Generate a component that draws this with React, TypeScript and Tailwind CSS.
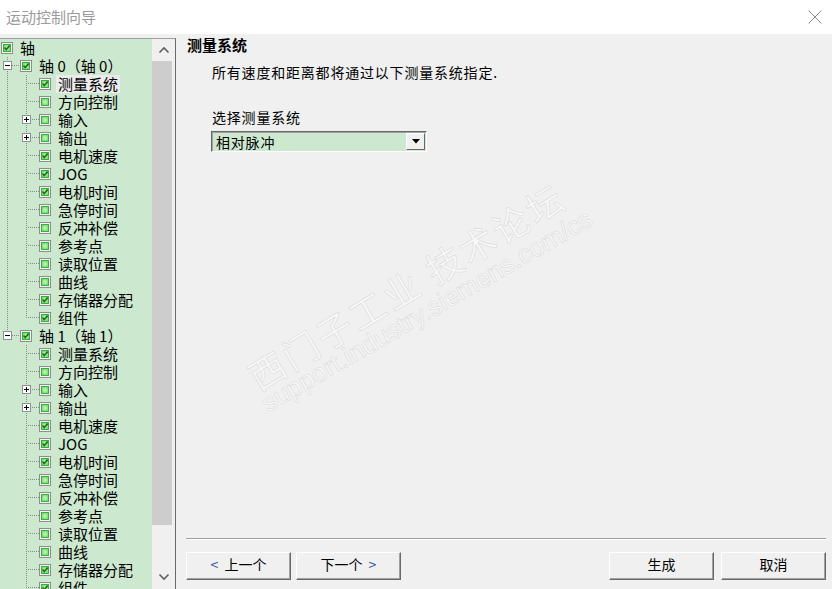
import { useId } from "react";

type Item = { t: string; c: boolean; exp?: boolean };

const items: Item[] = [
  { t: "测量系统", c: true },
  { t: "方向控制", c: false },
  { t: "输入", c: false, exp: true },
  { t: "输出", c: false, exp: true },
  { t: "电机速度", c: true },
  { t: "JOG", c: true },
  { t: "电机时间", c: true },
  { t: "急停时间", c: false },
  { t: "反冲补偿", c: false },
  { t: "参考点", c: false },
  { t: "读取位置", c: false },
  { t: "曲线", c: false },
  { t: "存储器分配", c: true },
  { t: "组件", c: true },
];

function Check({ checked }: { checked: boolean }) {
  const id = useId();
  return (
    <svg width="12" height="12" className="shrink-0">
      <defs>
        <radialGradient id={id} cx="50%" cy="50%" r="70%">
          <stop offset="0%" stopColor="#c8f7bf" />
          <stop offset="100%" stopColor="#4fd34f" />
        </radialGradient>
      </defs>
      <rect x="0.5" y="0.5" width="11" height="11" fill="#f4f4f4" stroke="#8d8d8d" />
      <rect x="2.5" y="2.5" width="7" height="7" fill={`url(#${id})`} stroke="#3aae3a" />
      {checked && <path d="M3.5 5.5 L5.2 7.5 L8.7 3.6" stroke="#1e6e1e" strokeWidth="1.6" fill="none" />}
    </svg>
  );
}

function Expander({ x, open }: { x: number; open: boolean }) {
  return (
    <g>
      <rect x={x + 0.5} y="4.5" width="8" height="8" fill="#fff" stroke="#8f8f8f" />
      <line x1={x + 2} y1="8.5" x2={x + 7} y2="8.5" stroke="#000" />
      {!open && <line x1={x + 4.5} y1="6" x2={x + 4.5} y2="11" stroke="#000" />}
    </g>
  );
}

const dot = { stroke: "#8a8a8a", strokeDasharray: "1 1" };

function AxisLines({ last }: { last: boolean }) {
  return (
    <svg width="20" height="18" className="shrink-0">
      <line x1="7.5" y1="0" x2="7.5" y2={last ? 5 : 18} {...dot} />
      <line x1="12" y1="8.5" x2="20" y2="8.5" {...dot} />
      <Expander x={3} open />
    </svg>
  );
}

function ChildLines({ trunk, last, exp }: { trunk: boolean; last: boolean; exp?: boolean }) {
  return (
    <svg width="39" height="18" className="shrink-0">
      {trunk && <line x1="7.5" y1="0" x2="7.5" y2="18" {...dot} />}
      <line x1="26.5" y1="0" x2="26.5" y2={last ? 9 : 18} {...dot} />
      <line x1="28" y1="8.5" x2="39" y2="8.5" {...dot} />
      {exp && <Expander x={22} open={false} />}
    </svg>
  );
}

function Axis({ n, last, selectFirst }: { n: number; last: boolean; selectFirst: boolean }) {
  return (
    <>
      <div className="flex h-[18px] items-center">
        <AxisLines last={last} />
        <Check checked />
        <span className="ml-[7px] leading-[18px]">轴 {n}（轴 {n}）</span>
      </div>
      {items.map((it, i) => (
        <div key={i} className="flex h-[18px] items-center">
          <ChildLines trunk={!last} last={i === items.length - 1} exp={it.exp} />
          <Check checked={it.c} />
          <span
            className={
              "ml-[5px] px-[2px] leading-[18px] " + (selectFirst && i === 0 ? "bg-[#ececec]" : "")
            }
          >
            {it.t}
          </span>
        </div>
      ))}
    </>
  );
}

function Chevron({ up }: { up: boolean }) {
  return (
    <svg width="12" height="8">
      <polyline
        points={up ? "1.5,6.5 6,2 10.5,6.5" : "1.5,1.5 6,6 10.5,1.5"}
        fill="none"
        stroke="#606060"
        strokeWidth="1.6"
      />
    </svg>
  );
}

function Btn({ children }: { children: React.ReactNode }) {
  return (
    <button className="flex h-[28px] w-[105px] items-center justify-center border border-t-white border-l-white border-b-[#696969] border-r-[#696969] bg-[#f0f0f0] pb-[4px] text-[14px] leading-[18px] text-black shadow-[inset_-1px_-1px_0_#a0a0a0]">
      {children}
    </button>
  );
}

export default function App() {
  return (
    <div className="relative flex h-[589px] w-[832px] flex-col overflow-hidden bg-[#f0f0f0] font-['Noto_Sans_CJK_SC',sans-serif] text-black">
      {/* title bar */}
      <div className="flex h-[34px] shrink-0 items-center justify-between bg-white pl-[6px] pr-[10px]">
        <span className="text-[15px] text-[#9a9a9a]">运动控制向导</span>
        <svg width="14" height="14">
          <path d="M0.5 0.5 L13.5 13.5 M13.5 0.5 L0.5 13.5" stroke="#8a8a8a" strokeWidth="1" />
        </svg>
      </div>

      <div className="flex min-h-0 flex-1">
        {/* tree panel */}
        <div className="mt-[4px] flex w-[176px] shrink-0 border-t border-r border-t-[#a0a0a0] border-r-[#696969]">
          <div className="w-[152px] overflow-hidden bg-[#cce8cf] text-[15px]">
            <div className="flex h-[18px] items-center pl-[1px]">
              <Check checked />
              <span className="ml-[7px] leading-[18px]">轴</span>
            </div>
            <Axis n={0} last={false} selectFirst />
            <Axis n={1} last selectFirst={false} />
          </div>
          <div className="flex w-[23px] flex-col items-center bg-[#f0f0f0] pb-[3px]">
            <div className="flex h-[22px] items-center">
              <Chevron up />
            </div>
            <div className="w-full flex-1">
              <div className="h-[464px] w-[20px] bg-[#cdcdcd]" />
            </div>
            <div className="flex h-[18px] items-center">
              <Chevron up={false} />
            </div>
          </div>
        </div>

        {/* content */}
        <div className="flex flex-1 flex-col pl-[10px] pr-[6px]">
          <div className="mt-[2px] pl-[1px] text-[15px] font-bold leading-[18px]">测量系统</div>
          <div className="mt-[9px] pl-[26px] text-[14px] leading-[18px] tracking-[0.8px]">
            所有速度和距离都将通过以下测量系统指定.
          </div>
          <div className="mt-[27px] pl-[26px] text-[14px] leading-[18px] tracking-[0.8px]">选择测量系统</div>
          <div className="ml-[25px] mt-[5px] flex h-[21px] w-[216px] items-center border border-t-[#696969] border-l-[#696969] border-b-white border-r-white bg-[#cce8cf] shadow-[inset_1px_1px_0_#a0a0a0]">
            <span className="flex-1 pl-[4px] text-[14px] leading-[18px] tracking-[0.8px]">相对脉冲</span>
            <div className="mr-[1px] flex h-[17px] w-[19px] items-center justify-center border border-t-white border-l-white border-b-[#696969] border-r-[#696969] bg-[#f0f0f0]">
              <svg width="8" height="5">
                <path d="M0 0 L8 0 L4 4.5 Z" fill="#000" />
              </svg>
            </div>
          </div>

          <div className="flex-1" />
          <div className="border-t border-t-[#a0a0a0] shadow-[0_1px_0_#fff]" />
          <div className="mb-[9px] mt-[13px] flex items-center">
            <div className="flex gap-[5px]">
              <Btn>
                <span className="text-[#1f4fa0]">&lt;</span>
                <span className="ml-[6px]">上一个</span>
              </Btn>
              <Btn>
                <span>下一个</span>
                <span className="ml-[6px] text-[#1f4fa0]">&gt;</span>
              </Btn>
            </div>
            <div className="flex-1" />
            <div className="flex gap-[7px]">
              <Btn>生成</Btn>
              <Btn>取消</Btn>
            </div>
          </div>
        </div>
      </div>

      {/* watermark */}
      <div className="pointer-events-none absolute inset-0 select-none">
        <div className="absolute left-[406px] top-[285px] -translate-x-1/2 -translate-y-1/2 rotate-[-31deg] whitespace-nowrap text-[36px] tracking-[3px] text-[#f9f9f9] [-webkit-text-stroke:0.6px_#dadada]">
          西门子工业 技术论坛
        </div>
        <div className="absolute left-[427px] top-[311px] -translate-x-1/2 -translate-y-1/2 rotate-[-30deg] whitespace-nowrap font-['Liberation_Sans',sans-serif] text-[26px] text-[#f9f9f9] [-webkit-text-stroke:0.6px_#dadada]">
          support.industry.siemens.com/cs
        </div>
      </div>
    </div>
  );
}
